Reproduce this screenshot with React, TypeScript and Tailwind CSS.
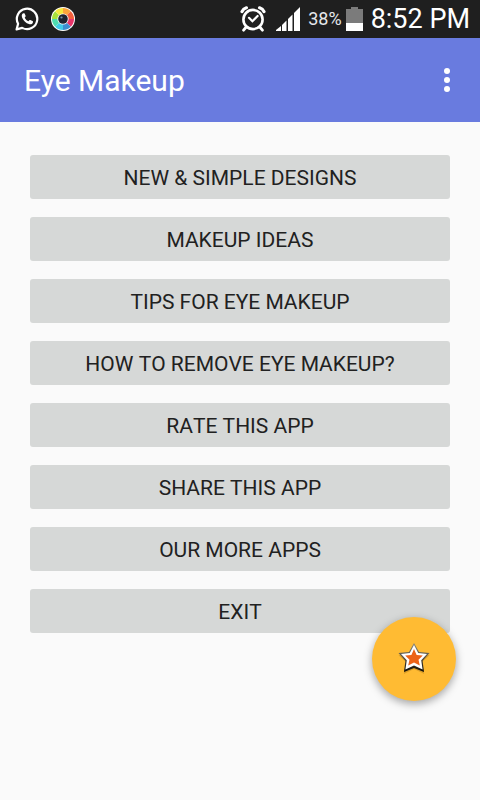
const menuItems = [
  'New & Simple Designs',
  'Makeup Ideas',
  'Tips for Eye Makeup',
  'How to Remove Eye Makeup?',
  'Rate This App',
  'Share This App',
  'Our More Apps',
  'Exit',
];

function WhatsAppIcon() {
  return (
    <svg width="24" height="24" viewBox="0 0 24 24" aria-hidden="true">
      <path
        d="M1.6 22.4L3.1 16.8A10.2 10.2 0 1 1 7.2 20.9Z"
        fill="none"
        stroke="#fff"
        strokeWidth="2.2"
        strokeLinejoin="round"
      />
      <path
        d="M8.6 6.2C7.4 6.4 6.6 7.6 6.8 9.2C7.2 12.6 11 16.6 14.6 17.2C16.4 17.5 17.9 16.4 18 14.9C18 14.5 17.9 14.3 17.5 14.1L15.3 13C14.9 12.8 14.6 12.9 14.3 13.2L13.5 14.2C12 13.7 10.4 12.2 9.7 10.7L10.5 9.6C10.7 9.3 10.7 9.1 10.6 8.8L9.6 6.6C9.4 6.2 9.1 6.1 8.6 6.2Z"
        fill="#fff"
      />
    </svg>
  );
}

function ColorRingIcon() {
  return (
    <svg width="24" height="24" viewBox="0 0 24 24" aria-hidden="true">
      <circle cx="12" cy="12" r="12" fill="#fff" />
      <path d="M12 12V1A11 11 0 0 1 19.8 4.2Z" fill="#fba53a" />
      <path d="M12 12L19.8 4.2A11 11 0 0 1 23 12Z" fill="#f4603c" />
      <path d="M12 12H23A11 11 0 0 1 19.8 19.8Z" fill="#e8356a" />
      <path d="M12 12L19.8 19.8A11 11 0 0 1 12 23Z" fill="#3b8fd0" />
      <path d="M12 12V23A11 11 0 0 1 4.2 19.8Z" fill="#3fcbe8" />
      <path d="M12 12L4.2 19.8A11 11 0 0 1 1 12Z" fill="#4fdcb0" />
      <path d="M12 12H1A11 11 0 0 1 4.2 4.2Z" fill="#a8e03c" />
      <path d="M12 12L4.2 4.2A11 11 0 0 1 12 1Z" fill="#f6e83c" />
      <circle cx="12" cy="12" r="5.6" fill="#fff" />
      <circle cx="12" cy="12" r="4.8" fill="#1c2430" />
      <circle cx="10.5" cy="10.5" r="1.1" fill="#7c93a8" />
    </svg>
  );
}

function AlarmIcon() {
  return (
    <svg width="26" height="26" viewBox="0 0 26 26" fill="none" stroke="#fff" strokeLinecap="round" aria-hidden="true">
      <circle cx="13" cy="13.5" r="9.6" strokeWidth="2.6" />
      <path d="M2 5.6C2.8 3.8 4.4 2.4 6.4 1.8M24 5.6C23.2 3.8 21.6 2.4 19.6 1.8" strokeWidth="3.2" />
      <path d="M5.8 21.5L3.6 24.2M20.2 21.5L22.4 24.2" strokeWidth="2.8" />
      <path d="M9 11.8L12.4 15.2L17.6 10" strokeWidth="2.2" />
    </svg>
  );
}

function SignalIcon() {
  return (
    <svg width="24" height="24" viewBox="0 0 24 24" fill="#fff" aria-hidden="true">
      <path d="M0 24V23L5 19V24Z" />
      <path d="M6 24V18L10.5 13.5V24Z" />
      <path d="M12 24V12L16.5 7.5V24Z" />
      <path d="M18 24V6L24 0V24Z" />
    </svg>
  );
}

function BatteryIcon() {
  return (
    <svg width="17" height="24" viewBox="0 0 17 24" aria-hidden="true">
      <path d="M5 0H12V2H17V16H0V2H5Z" fill="#7b7b7b" />
      <path d="M0 16H17V24H0Z" fill="#fff" />
    </svg>
  );
}

function StarIcon() {
  return (
    <svg width="32" height="32" viewBox="0 0 32 32" aria-hidden="true">
      <defs>
        <linearGradient id="edge" x1="0" y1="0" x2="0" y2="1">
          <stop offset="0" stopColor="#8a8a80" />
          <stop offset="0.6" stopColor="#4a4334" />
          <stop offset="1" stopColor="#0c0a06" />
        </linearGradient>
      </defs>
      <path d="M16 1L20.8 10.6L31.5 12.2L23.8 19.2L26.2 31L16 26L5.8 31L8.2 19.2L0.5 12.2L11.2 10.6Z" fill="#9a6a10" opacity="0.35" />
      <path d="M16 0L21 9L31.5 10L24.6 17.8L26 29L16 25L6 29L7.4 17.8L0.5 10L11 9Z" fill="url(#edge)" />
      <path d="M16 2L20.2 10L29 10.9L23.2 17.3L24.6 26.4L16 22.6L7.4 26.4L8.8 17.3L3 10.9L11.8 10Z" fill="#fff" />
      <path d="M16 6L18.6 11.9L24.8 12.5L20.5 16.7L21.8 22.6L16 19.6L10.2 22.6L11.5 16.7L7.2 12.5L13.4 11.9Z" fill="#ec6318" />
    </svg>
  );
}

function StatusBar() {
  return (
    <div className="flex h-[38px] items-center justify-between bg-[#1f1f1f] pl-[15px] pr-2.5 text-white">
      <div className="flex items-center gap-3">
        <WhatsAppIcon />
        <ColorRingIcon />
      </div>
      <div className="flex items-center gap-2">
        <div className="flex items-center gap-2.5">
          <AlarmIcon />
          <SignalIcon />
        </div>
        <div className="flex items-center gap-1">
          <span className="text-lg text-gray-200">38%</span>
          <BatteryIcon />
        </div>
        <span className="text-[27px] leading-none">8:52 PM</span>
      </div>
    </div>
  );
}

function AppBar() {
  return (
    <header className="flex h-[84px] items-center justify-between bg-[#697bdf] px-6 text-white">
      <h1 className="text-[30px]">Eye Makeup</h1>
      <button type="button" aria-label="More options" className="flex w-[18px] flex-col items-center gap-[3px] py-2">
        <span className="h-1.5 w-1.5 rounded-full bg-white" />
        <span className="h-1.5 w-1.5 rounded-full bg-white" />
        <span className="h-1.5 w-1.5 rounded-full bg-white" />
      </button>
    </header>
  );
}

export default function App() {
  return (
    <div className="min-h-screen bg-[#fafafa] font-[Roboto,sans-serif]">
      <StatusBar />
      <AppBar />
      <main className="flex flex-col gap-[18px] px-[30px] py-[33px]">
        {menuItems.map((item) => (
          <button
            key={item}
            type="button"
            className="h-11 rounded-[3px] bg-[#d6d8d7] pt-1 text-[21px] uppercase text-[#212121] [font-kerning:none]"
          >
            {item}
          </button>
        ))}
      </main>
      <button
        type="button"
        aria-label="Favourites"
        className="fixed bottom-[99px] right-6 flex h-[84px] w-[84px] items-center justify-center rounded-full bg-[#ffbb33] shadow-[0_3px_9px_rgba(0,0,0,0.35)]"
      >
        <StarIcon />
      </button>
    </div>
  );
}
